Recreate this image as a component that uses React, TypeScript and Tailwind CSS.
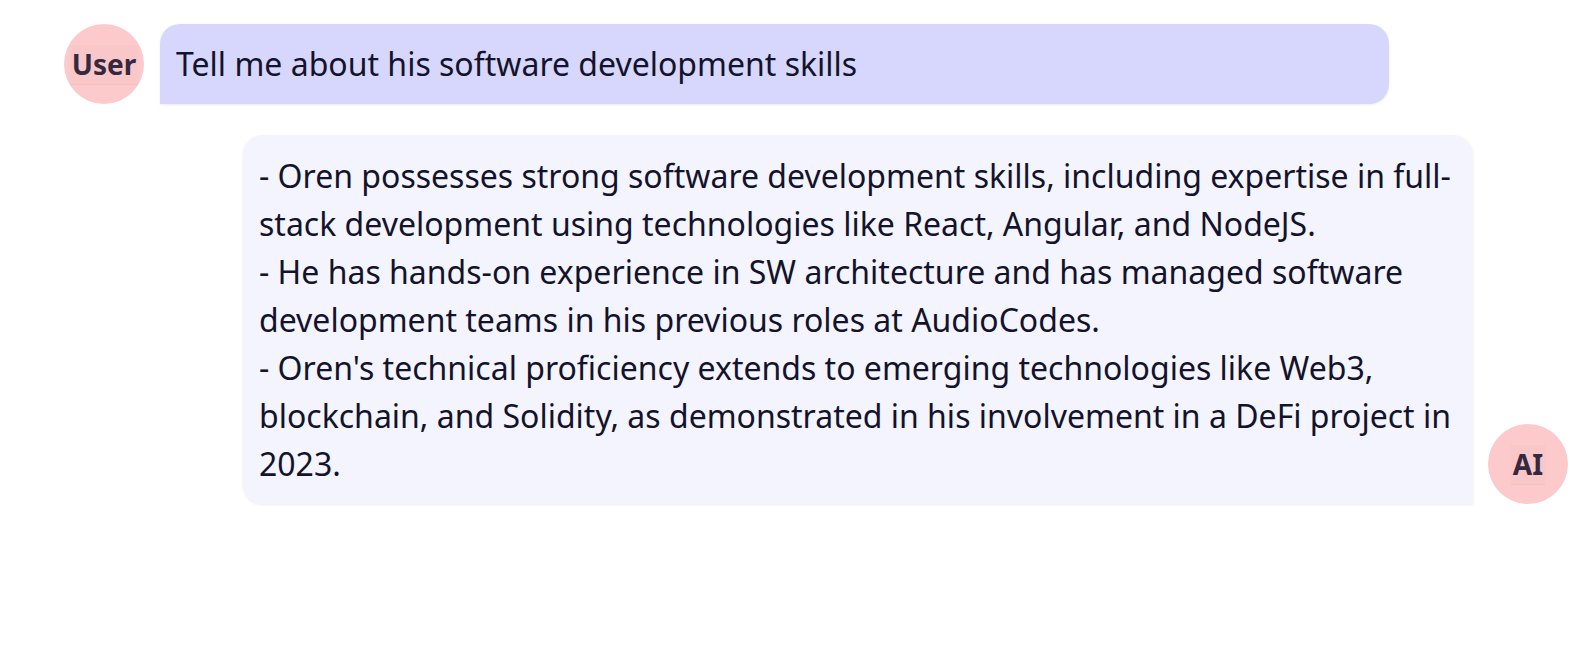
import React from "react";

function Avatar({ label }: { label: string }) {
  return (
    <div className="flex h-[80px] w-[80px] shrink-0 items-center justify-center rounded-full bg-[#fccaca]">
      <span className="bg-[#f9c7c8] px-[2px] text-[28px] font-bold leading-[39px] text-[#352840] shadow-[0_1px_1px_rgba(0,0,0,0.04)]">
        {label}
      </span>
    </div>
  );
}

export default function App() {
  return (
    <div
      className="min-h-[658px] w-full bg-white px-6 pt-6"
      style={{ fontFamily: '"Noto Sans", "Open Sans", sans-serif' }}
    >
      <div className="flex items-center gap-4 pl-10">
        <Avatar label="User" />
        <div className="w-[1229px] rounded-[20px] rounded-bl-none bg-[#d7d7fd] px-4 py-4 text-[32px] leading-[48px] text-[#13132b] shadow-[0_1px_3px_rgba(0,0,0,0.08)]">
          Tell me about his software development skills
        </div>
      </div>
      <div className="mt-[31px] flex items-end justify-end gap-[15px]">
        <div className="w-[1230px] rounded-[20px] rounded-br-none bg-[#f4f4fe] pb-4 pl-4 pr-5 pt-[17px] text-[32px] leading-[48px] text-[#13132b] shadow-[0_1px_3px_rgba(0,0,0,0.08)]">
          <div>
            - Oren possesses strong software development skills, including expertise in full-stack development using technologies like React, Angular, and NodeJS.
          </div>
          <div>
            - He has hands-on experience in SW architecture and has managed software development teams in his previous roles at AudioCodes.
          </div>
          <div>
            - Oren's technical proficiency extends to emerging technologies like Web3, blockchain, and Solidity, as demonstrated in his involvement in a DeFi project in 2023.
          </div>
        </div>
        <Avatar label="AI" />
      </div>
    </div>
  );
}
